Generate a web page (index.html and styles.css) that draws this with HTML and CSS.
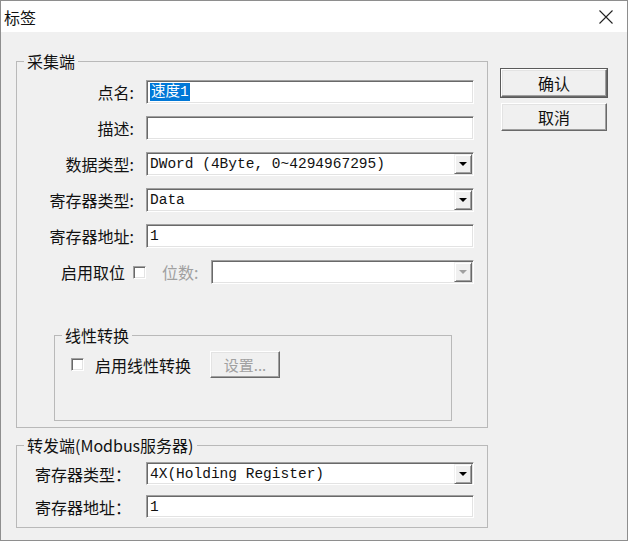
FILE: index.html
```html
<!DOCTYPE html>
<html lang="zh-CN">
<head>
    <meta charset="UTF-8">
    <title>标签</title>
    <link rel="stylesheet" href="styles.css">
</head>
<body>
    <div class="dialog">
        <div class="titlebar">
            <span class="title">标签</span>
            <svg class="close" width="16" height="16" viewBox="0 0 16 16">
                <path d="M1.5 1.5 L14.5 14.5 M14.5 1.5 L1.5 14.5" stroke="#222" stroke-width="1.1" fill="none"/>
            </svg>
        </div>
        <div class="body">
            <div class="main">
                <fieldset class="group">
                    <legend>采集端</legend>
                    <div class="fields">
                        <span class="label">点名:</span>
                        <div class="edit"><span class="selected">速度1</span></div>

                        <span class="label">描述:</span>
                        <div class="edit"></div>

                        <span class="label">数据类型:</span>
                        <div class="edit combo"><span>DWord (4Byte, 0~4294967295)</span><span class="arrow"></span></div>

                        <span class="label">寄存器类型:</span>
                        <div class="edit combo"><span>Data</span><span class="arrow"></span></div>

                        <span class="label">寄存器地址:</span>
                        <div class="edit"><span>1</span></div>

                        <div class="bitrow">
                            <div class="bitleft">
                                <span>启用取位</span>
                                <span class="check"></span>
                            </div>
                            <span class="muted">位数:</span>
                            <div class="edit combo bitcombo"><span></span><span class="arrow disabled"></span></div>
                        </div>
                    </div>

                    <fieldset class="group linear">
                        <legend>线性转换</legend>
                        <div class="linear-row">
                            <span class="check"></span>
                            <span>启用线性转换</span>
                            <button class="btn small" disabled>设置...</button>
                        </div>
                    </fieldset>
                </fieldset>

                <fieldset class="group forward">
                    <legend>转发端(Modbus服务器)</legend>
                    <div class="fields fwd-fields">
                        <span class="label left">寄存器类型：</span>
                        <div class="edit combo"><span>4X(Holding Register)</span><span class="arrow"></span></div>

                        <span class="label left">寄存器地址：</span>
                        <div class="edit"><span>1</span></div>
                    </div>
                </fieldset>
            </div>

            <div class="actions">
                <button class="btn default">确认</button>
                <button class="btn">取消</button>
            </div>
        </div>
    </div>
</body>
</html>
```

FILE: styles.css
```css
* {
    box-sizing: border-box;
}
html, body {
    margin: 0;
    padding: 0;
}
body {
    width: 628px;
    height: 541px;
    font-family: "Noto Sans CJK SC", "Liberation Sans", sans-serif;
    font-size: 16px;
    color: #111;
    background: #f0f0f0;
}
.dialog {
    width: 628px;
    height: 541px;
    border: 1px solid #8e8e8e;
    background: #f0f0f0;
    display: flex;
    flex-direction: column;
}
.titlebar {
    height: 31px;
    flex: none;
    background: #fff;
    display: flex;
    align-items: center;
    justify-content: space-between;
    padding: 0 13px 0 3px;
}
.title {
    font-size: 16px;
    line-height: 20px;
}
.body {
    display: flex;
    align-items: flex-start;
    padding: 20px 0 0 15px;
}
.main {
    width: 472px;
}
.group {
    margin: 0;
    padding: 0;
    min-width: 0;
    border: 1px solid #b9b9b9;
}
.group legend {
    margin-left: 7px;
    padding: 0 3px;
    font-size: 16px;
    line-height: 18px;
}
.fields {
    display: grid;
    grid-template-columns: 121px 328px;
    grid-auto-rows: 24px;
    column-gap: 8px;
    row-gap: 12px;
    align-items: center;
    padding-top: 10px;
}
.label {
    text-align: right;
    padding-right: 4px;
    white-space: nowrap;
    line-height: 20px;
}
.label.left {
    text-align: left;
    padding-left: 18px;
}
.edit {
    height: 100%;
    background: #fff;
    border: 1px solid;
    border-color: #a0a0a0 #fff #fff #a0a0a0;
    box-shadow: inset 1px 1px #696969, inset -1px -1px #e3e3e3;
    font-family: "Liberation Mono", "Noto Sans CJK SC", monospace;
    font-size: 14.5px;
    line-height: 18px;
    display: flex;
    align-items: center;
    padding: 0 2px 0 3px;
    white-space: nowrap;
    overflow: hidden;
}
.selected {
    background: #0078d7;
    color: #fff;
    padding: 0 1px;
}
.combo {
    justify-content: space-between;
    padding-right: 1px;
}
.arrow {
    flex: none;
    width: 18px;
    height: 20px;
    background: #f0f0f0;
    border: 1px solid;
    border-color: #f0f0f0 #696969 #696969 #f0f0f0;
    box-shadow: inset 1px 1px #fff, inset -1px -1px #a0a0a0;
    display: flex;
    align-items: center;
    justify-content: center;
}
.arrow::after {
    content: "";
    border-left: 4px solid transparent;
    border-right: 4px solid transparent;
    border-top: 4px solid #000;
}
.arrow.disabled::after {
    border-top-color: #a0a0a0;
}
.bitrow {
    grid-column: 1 / -1;
    display: flex;
    align-items: center;
    height: 24px;
}
.bitleft {
    width: 129px;
    display: flex;
    justify-content: flex-end;
    align-items: center;
    gap: 8px;
}
.muted {
    color: #a0a0a0;
    margin-left: 16px;
}
.bitcombo {
    flex: 1;
    margin-left: 13px;
}
.check {
    flex: none;
    width: 13px;
    height: 13px;
    background: #fff;
    border: 1px solid;
    border-color: #a0a0a0 #fff #fff #a0a0a0;
    box-shadow: inset 1px 1px #696969, inset -1px -1px #e3e3e3;
}
.linear {
    width: 398px;
    margin: 42px 0 6px 37px;
}
.linear-row {
    display: flex;
    align-items: center;
    padding: 7px 0 42px 16px;
}
.linear-row .check {
    margin-right: 11px;
}
.forward {
    margin-top: 8px;
}
.fwd-fields {
    grid-auto-rows: 23px;
    row-gap: 10px;
    padding-top: 8px;
    padding-bottom: 9px;
}
.actions {
    margin: 17px 0 0 13px;
    display: flex;
    flex-direction: column;
    gap: 6px;
}
.btn {
    width: 106px;
    height: 28px;
    padding: 0;
    background: #f0f0f0;
    border: 1px solid;
    border-color: #fff #696969 #696969 #fff;
    box-shadow: inset -1px -1px #a0a0a0, inset 1px 1px #e3e3e3;
    font-family: "Noto Sans CJK SC", sans-serif;
    font-size: 16px;
    color: #111;
    display: flex;
    align-items: center;
    justify-content: center;
}
.btn.default {
    outline: 1px solid #5a5a5a;
}
.btn.small {
    width: 70px;
    height: 27px;
    margin-left: 19px;
    color: #a0a0a0;
    font-size: 15px;
}
```
